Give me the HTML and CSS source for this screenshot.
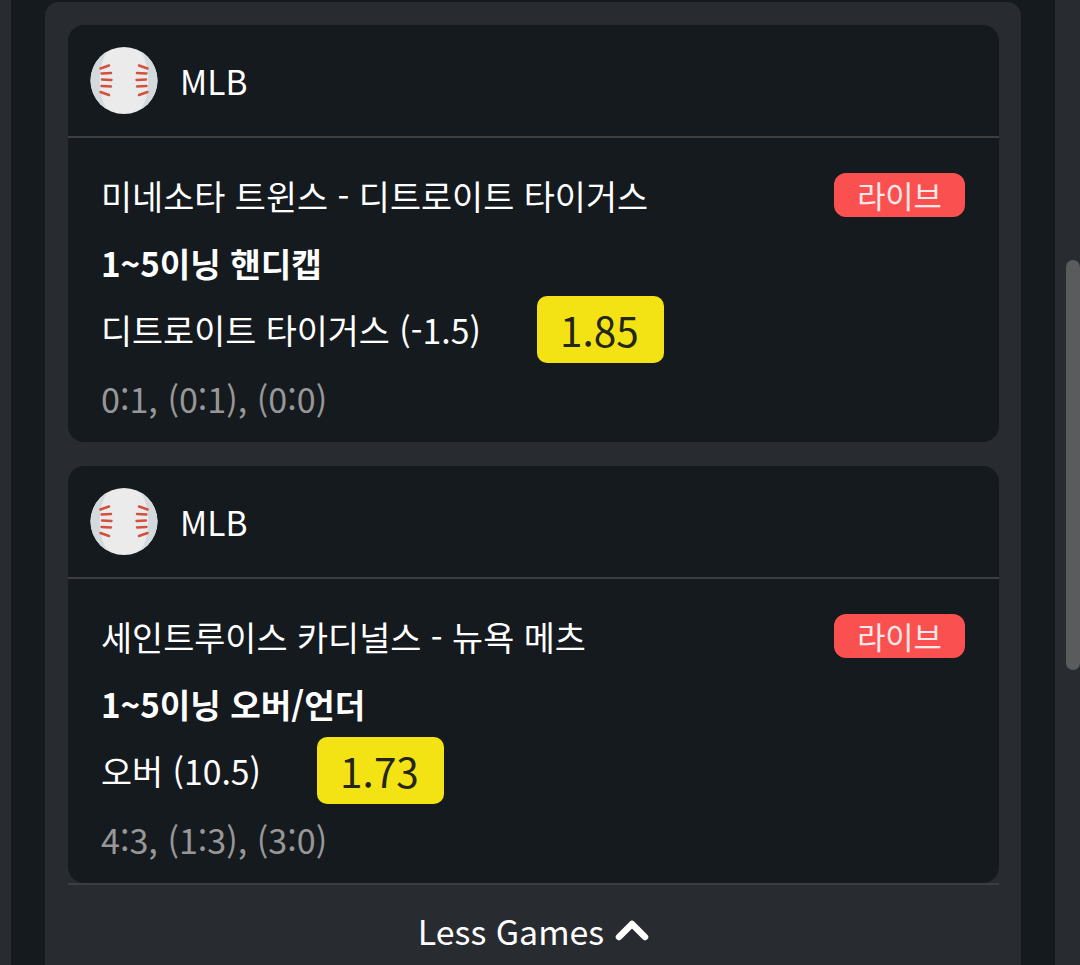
FILE: index.html
```html
<!DOCTYPE html>
<html lang="ko">
<head>
<meta charset="utf-8">
<title>MLB</title>
<link rel="stylesheet" href="styles.css">
</head>
<body>
<div class="page">
  <div class="side-left"></div>
  <main class="panel">
    <section class="card">
      <header class="card-head">
        <svg class="ball" viewBox="0 0 68 68"><use href="#baseball"/></svg>
        <span class="league">MLB</span>
      </header>
      <div class="card-body">
        <div class="row-title">
          <span class="match">미네소타 트윈스 - 디트로이트 타이거스</span>
          <span class="live">라이브</span>
        </div>
        <div class="market">1~5이닝 핸디캡</div>
        <div class="row-pick">
          <span class="pick">디트로이트 타이거스 (-1.5)</span>
          <span class="odds">1.85</span>
        </div>
        <div class="score">0:1, (0:1), (0:0)</div>
      </div>
    </section>
    <section class="card">
      <header class="card-head">
        <svg class="ball" viewBox="0 0 68 68"><use href="#baseball"/></svg>
        <span class="league">MLB</span>
      </header>
      <div class="card-body">
        <div class="row-title">
          <span class="match">세인트루이스 카디널스 - 뉴욕 메츠</span>
          <span class="live">라이브</span>
        </div>
        <div class="market">1~5이닝 오버/언더</div>
        <div class="row-pick">
          <span class="pick">오버 (10.5)</span>
          <span class="odds">1.73</span>
        </div>
        <div class="score">4:3, (1:3), (3:0)</div>
      </div>
    </section>
    <div class="less">
      <span>Less Games</span>
      <svg class="chev" viewBox="0 0 34 22"><path d="M4 18 L17 5 L30 18" fill="none" stroke="#fff" stroke-width="6.5" stroke-linecap="round" stroke-linejoin="round"/></svg>
    </div>
  </main>
  <div class="side-right"><div class="thumb"></div></div>
</div>
<svg class="defs" width="0" height="0">
  <defs>
    <clipPath id="ballclip"><circle cx="34" cy="33.500" r="33.500"/></clipPath>
    <g id="baseball">
      <circle cx="34" cy="33.500" r="33.500" fill="#ebebeb"/>
      <g clip-path="url(#ballclip)">
        <path d="M18 4C7 18 7 49 18 63H-2V4Z" fill="#d3dade"/>
        <path d="M50 4C61 18 61 49 50 63H70V4Z" fill="#d3dade"/>
      </g>
      <g fill="none" stroke="#d4503e" stroke-width="2.400" stroke-linecap="round">
        <path d="M10.500 21.500L19 18.500M11.500 26.500L21 26M12 32.500L21.500 33M11.500 39L21 39.500M10.500 45L19 48"/>
        <path d="M57.500 21.500L49 18.500M56.500 26.500L47 26M56 32.500L46.500 33M56.500 39L47 39.500M57.500 45L49 48"/>
      </g>
    </g>
  </defs>
</svg>
</body>
</html>
```

FILE: styles.css
```css
* { box-sizing: border-box; }
html, body { margin: 0; height: 100%; overflow: hidden; }
body {
  background: #151a1f;
  font-family: "Noto Sans CJK KR", "Noto Sans", sans-serif;
  color: #fff;
}
.page { display: flex; width: 1080px; height: 965px; padding-top: 2px; }
.side-left { width: 11px; margin-top: -2px; background: #282c30; flex: none; }
.panel {
  width: 976px;
  margin-left: 34px;
  flex: none;
  background: #282c30;
  border-radius: 14px 14px 0 0;
  padding: 23px 22px 0 23px;
  display: flex;
  flex-direction: column;
  gap: 24px;
}
.side-right {
  position: relative;
  width: 25px;
  margin-left: 34px;
  margin-top: -2px;
  background: #282c30;
  flex: none;
}
.thumb {
  position: absolute;
  top: 260px;
  right: 0;
  width: 14px;
  height: 410px;
  border-radius: 7px;
  background: #5a5b5c;
}
.card { background: #151a1f; border-radius: 16px; overflow: hidden; flex: none; }
.card-head {
  height: 113px;
  display: flex;
  align-items: center;
  gap: 23px;
  padding: 1px 0 0 22px;
  border-bottom: 2px solid #3c3e40;
}
.ball { width: 68px; height: 68px; flex: none; }
.league { font-size: 33.5px; line-height: 44px; margin-left: -1px; }
.card-body { padding: 34px 34px 22px 34px; }
.row-title {
  display: flex;
  justify-content: space-between;
  align-items: flex-start;
  height: 46px;
}
.match { font-size: 33.8px; line-height: 48px; margin-left: -1px; }
.live {
  width: 131px;
  height: 44px;
  margin-top: 1px;
  border-radius: 12px;
  background: #fb5050;
  color: #fce8e8;
  font-size: 30.7px;
  line-height: 44px;
  text-align: center;
}
.market { font-size: 33.2px; font-weight: 700; line-height: 44px; margin-top: 23px; margin-left: -1px; }
.row-pick { display: flex; align-items: center; gap: 56px; margin-top: 11px; }
.pick { font-size: 33.75px; line-height: 46px; margin-left: -1px; }
.odds {
  width: 127px;
  height: 67px;
  border-radius: 10px;
  background: #f3e314;
  color: #24261c;
  font-size: 40.5px;
  line-height: 67px;
  text-align: center;
  text-indent: -2px;
}
.score { font-size: 34.1px; line-height: 44px; color: #979797; margin-top: 13px; margin-left: -1px; }
.less {
  flex: none;
  border-top: 2px solid #3c3e40;
  margin-top: -24px;
  height: 94px;
  display: flex;
  justify-content: center;
  align-items: center;
  gap: 11px;
  font-size: 33.9px;
  padding-bottom: 2px;
}
.chev { width: 34px; height: 22px; flex: none; }
.defs { position: absolute; }
```
